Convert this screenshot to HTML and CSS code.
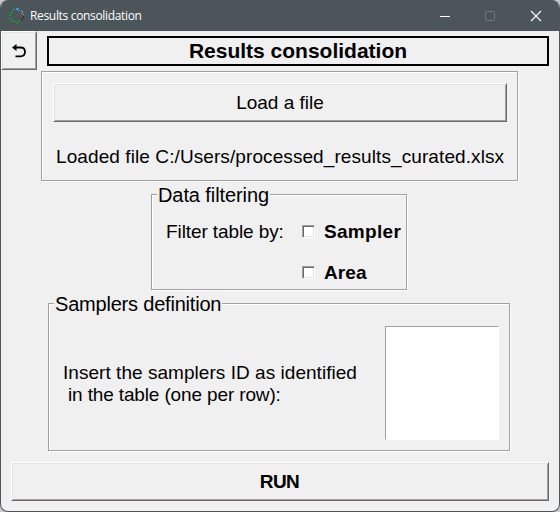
FILE: index.html
```html
<!DOCTYPE html>
<html lang="en">
<head>
<meta charset="utf-8">
<title>Results consolidation</title>
<link rel="stylesheet" href="styles.css">
</head>
<body>
<div class="window">
  <header class="titlebar">
    <svg class="app-icon" width="16" height="16" viewBox="0 0 16 16" fill="none" shape-rendering="crispEdges">
      <path d="M4 1h2v1h-2zM7 0h3v1h-3zM7 1h2v1h-2zM9 2h2v1h-2z" fill="#1fa4f5"/>
      <path d="M12 2h1v1h-1zM13 3h1v2h-1zM14 6h1v1h-1zM12 5h1v1h-1z" fill="#9a9da0"/>
      <path d="M14 8h1v2h-1zM13 10h1v2h-1zM12 12h1v1h-1z" fill="#4b1c1c"/>
      <path d="M2 3h2v1h-2zM1 5h2v1h-2zM0 7h2v1h-2zM0 9h1v1h-1zM1 10h2v1h-2zM2 12h2v1h-2zM3 13h1v1h-1zM5 13h2v1h-2zM7 15h2v1h-2zM8 13h1v1h-1zM10 13h2v1h-2z" fill="#0fa52a"/>
    </svg>
    <span class="caption">Results consolidation</span>
    <svg class="controls" width="102" height="12" viewBox="0 0 102 12" fill="none">
      <path d="M0 6.500H10" stroke="#fff"/>
      <rect x="45.500" y="1.500" width="9" height="9" rx="1" stroke="#727b7c"/>
      <path d="M91 1L101 11M101 1L91 11" stroke="#fff" stroke-width="1.100"/>
    </svg>
  </header>
  <main class="content">
    <div class="top">
      <button class="btn back" aria-label="Back">
        <svg width="14" height="14" viewBox="0 0 14 14" fill="none" stroke="#000">
          <path d="M3 3.500H8.500C11.500 3.500 13 5.200 13 7.800C13 10.800 11.200 12.300 8.500 12.300H3.500" stroke-width="1.800"/>
          <path d="M0 3.500L4.500 0V7Z" fill="#000" stroke="none"/>
        </svg>
      </button>
      <h1 class="heading"><span>Results consolidation</span></h1>
    </div>
    <section class="group load">
      <button class="btn load-btn"><span>Load a file</span></button>
      <p class="loaded"><span>Loaded file C:/Users/processed_results_curated.xlsx</span></p>
    </section>
    <section class="group filter">
      <h2 class="legend"><span>Data filtering</span></h2>
      <div class="filter-grid">
        <span class="by">Filter table by:</span>
        <label class="check"><i class="box"></i><span class="sampler">Sampler</span></label>
        <label class="check second"><i class="box"></i><span class="area">Area</span></label>
      </div>
    </section>
    <section class="group samplers">
      <h2 class="legend"><span>Samplers definition</span></h2>
      <p class="hint"><span class="line1">Insert the samplers ID as identified</span><br><span class="line2">in the table (one per row):</span></p>
      <textarea class="ids"></textarea>
    </section>
    <button class="btn run"><span>RUN</span></button>
  </main>
</div>
</body>
</html>
```
FILE: styles.css
```css
* { box-sizing: border-box; }
body { margin: 0; background: #c8c8c8; font: 19px/22px "Liberation Sans", Arial, sans-serif; color: #000; }
h1, h2, p { margin: 0; font-weight: normal; }
span { white-space: nowrap; }
.window { width: 560px; height: 512px; border: 1px solid #4b555a; border-top: 0; border-radius: 8px; background: #f0f0f0; overflow: hidden; }
.titlebar { height: 31px; background: #4b555a; display: flex; align-items: center; padding: 0 17px 0 8px; color: #fff; }
.caption { font: 12px/16px "Open Sans", "Noto Sans", sans-serif; letter-spacing: -0.33px; margin-left: 5px; }
.controls { margin-left: auto; }
.content { display: flex; flex-direction: column; }
.top { display: flex; height: 40px; }
.btn { font: inherit; color: #000; padding: 0; background: #f0f0f0; border: 1px solid; border-color: #fff #696969 #696969 #fff; box-shadow: inset 1px 1px #e3e3e3, inset -1px -1px #a0a0a0; border-radius: 0; display: flex; align-items: center; justify-content: center; }
.back { width: 36px; height: 39px; }
.heading { margin: 5px 0 0 10px; width: 502px; height: 30px; border: 2px solid #000; font-size: 21px; line-height: 26px; font-weight: bold; text-align: center; }
.group { border: 1px solid #a0a0a0; box-shadow: inset 1px 1px #fff, 1px 1px #fff; }
.load { margin-left: 40px; width: 477px; height: 110px; padding: 11px; }
.load-btn { width: 454px; height: 39px; }
.loaded { margin: 24px 0 0 3px; letter-spacing: 0.09px; }
.filter { margin: 13px 0 0 150px; width: 256px; height: 96px; }
.legend { width: max-content; height: 22px; margin: -11px 0 0 5px; padding: 0 1px; background: #f0f0f0; font-size: 20px; letter-spacing: -0.09px; }
.filter-grid { display: grid; grid-template-columns: 136px auto; row-gap: 19px; padding: 15px 0 0 14px; }
.by { letter-spacing: -0.1px; }
.check { display: flex; align-items: center; font-weight: bold; }
.second { grid-column: 2; }
.sampler { letter-spacing: 0.3px; }
.area { letter-spacing: 0.1px; }
.box { width: 13px; height: 13px; margin: 0 9px 2px 0; background: #fff; border: 1px solid; border-color: #a0a0a0 #fff #fff #a0a0a0; box-shadow: inset 1px 1px #696969, inset -1px -1px #e3e3e3; }
.samplers { margin: 13px 0 0 47px; width: 462px; height: 148px; display: grid; grid-template-columns: 336px 114px; grid-template-rows: 11px auto; }
.samplers .legend { grid-column: 1 / 3; letter-spacing: -0.2px; }
.hint { padding: 47px 0 0 14px; }
.line1 { letter-spacing: 0.04px; }
.line2 { padding-left: 5px; letter-spacing: -0.14px; }
.ids { width: 114px; height: 114px; margin-top: 11px; padding: 0; resize: none; border: 1px solid; border-color: #a0a0a0 #fff #fff #a0a0a0; background: #fff; border-radius: 0; outline: 0; }
.run { margin: 11px 0 0 10px; width: 538px; height: 39px; padding-right: 1px; font-weight: bold; letter-spacing: -0.6px; }
```
